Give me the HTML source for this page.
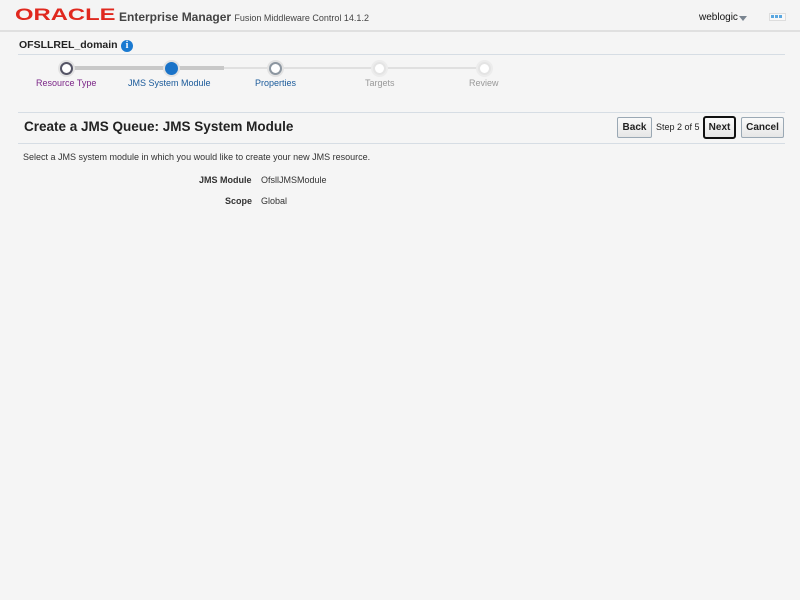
<!DOCTYPE html>
<html><head><style>
body{margin:0;width:800px;height:600px;background:#f5f5f5;font-family:"Liberation Sans",Arial,sans-serif;position:relative;overflow:hidden}
.a{position:absolute;white-space:nowrap}
.hdr{position:absolute;left:0;top:0;width:800px;height:30px;background:#f4f4f4;border-bottom:2px solid #e0e0e0}
.hl{position:absolute;height:1px;background:#d6dde4}
.c{position:absolute;width:9px;height:9px;border-radius:50%;background:#fff;border:2px solid #9aa4ad;box-shadow:0 0 0 2px #e2e2e2}
.btn{position:absolute;top:117px;height:19px;border:1px solid #9aa8b4;background:linear-gradient(#fafafa,#e6e6e6);font-size:10px;font-weight:bold;color:#222;text-align:center;line-height:19px;border-radius:2px}
</style></head><body>
<div class="hdr"></div>
<div class="a" style="left:15px;top:5px;font-size:17px;font-weight:bold;color:#e0281e;transform:scaleX(1.4);transform-origin:left">ORACLE</div>
<div class="a" style="left:119px;top:10px;font-size:12px;font-weight:bold;color:#444">Enterprise Manager <span style="font-weight:normal;font-size:9px">Fusion Middleware Control 14.1.2</span></div>
<div class="a" style="left:699px;top:12px;font-size:10px;color:#111">weblogic</div>
<div class="a" style="left:739px;top:16px;width:0;height:0;border-left:4px solid transparent;border-right:4px solid transparent;border-top:5px solid #7a8590"></div>
<div class="a" style="left:769px;top:13px;width:15px;height:6px;border:1px solid #ddd;background:#f8f8f8"></div>
<div class="a" style="left:771px;top:15px;font-size:0"><span style="display:inline-block;width:3px;height:3px;background:#5aa7e0;margin-right:1px"></span><span style="display:inline-block;width:3px;height:3px;background:#5aa7e0;margin-right:1px"></span><span style="display:inline-block;width:3px;height:3px;background:#5aa7e0"></span></div>
<div class="a" style="left:19px;top:39px;font-size:10.5px;font-weight:bold;color:#222">OFSLLREL_domain</div>
<div class="a" style="left:121px;top:40px;width:12px;height:12px;border-radius:50%;background:#1a7ad1;color:#fff;font-size:10px;font-weight:bold;text-align:center;line-height:12px;font-family:'Liberation Serif',serif">i</div>
<div class="hl" style="left:18px;top:54px;width:767px"></div>
<div class="a" style="left:66px;top:66px;width:158px;height:4px;background:#c8c8c8"></div>
<div class="a" style="left:224px;top:67px;width:260px;height:2px;background:#e0e0e0"></div>
<div class="c" style="left:60px;top:62px;border-color:#556"></div>
<div class="c" style="left:165px;top:62px;background:#1a73c8;border-color:#1a73c8"></div>
<div class="c" style="left:269px;top:62px;border-color:#8c96a0"></div>
<div class="c" style="left:373px;top:62px;border-color:#e4e4e4;box-shadow:0 0 0 2px #ececec"></div>
<div class="c" style="left:478px;top:62px;border-color:#e4e4e4;box-shadow:0 0 0 2px #ececec"></div>
<div class="a" style="left:36px;top:78px;font-size:9px;color:#7b2587">Resource Type</div>
<div class="a" style="left:128px;top:78px;font-size:9px;color:#1a5a9a">JMS System Module</div>
<div class="a" style="left:255px;top:78px;font-size:9px;color:#1a5a9a">Properties</div>
<div class="a" style="left:365px;top:78px;font-size:9px;color:#999">Targets</div>
<div class="a" style="left:469px;top:78px;font-size:9px;color:#999">Review</div>
<div class="hl" style="left:18px;top:112px;width:767px"></div>
<div class="a" style="left:24px;top:119px;font-size:13.5px;font-weight:bold;color:#222">Create a JMS Queue: JMS System Module</div>
<div class="btn" style="left:617px;width:33px">Back</div>
<div class="a" style="left:656px;top:122px;font-size:9px;color:#222">Step 2 of 5</div>
<div class="btn" style="left:703px;width:29px;border:2px solid #111;top:116px;border-radius:3px">Next</div>
<div class="btn" style="left:741px;width:41px">Cancel</div>
<div class="hl" style="left:18px;top:143px;width:767px"></div>
<div class="a" style="left:23px;top:152px;font-size:9px;color:#333">Select a JMS system module in which you would like to create your new JMS resource.</div>
<div class="a" style="left:199px;top:175px;font-size:9px;color:#333;font-weight:bold">JMS Module</div>
<div class="a" style="left:261px;top:175px;font-size:9px;color:#333">OfsllJMSModule</div>
<div class="a" style="left:225px;top:196px;font-size:9px;color:#333;font-weight:bold">Scope</div>
<div class="a" style="left:261px;top:196px;font-size:9px;color:#333">Global</div>
</body></html>
